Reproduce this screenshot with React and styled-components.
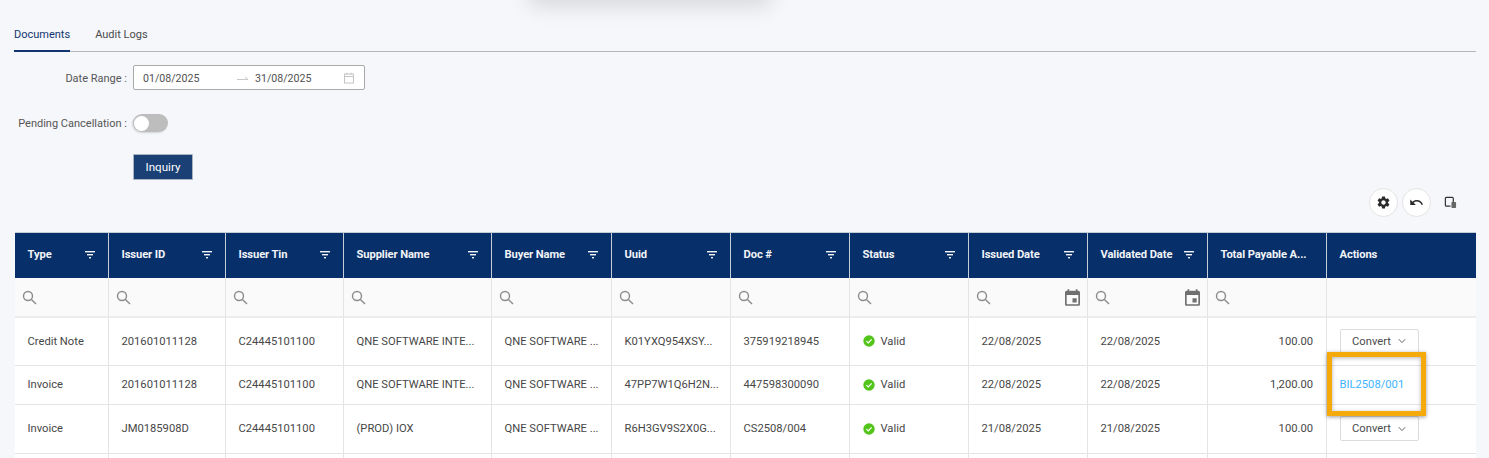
import React from 'react'
import styled, { createGlobalStyle } from 'styled-components'
import { MdSettings, MdUndo } from 'react-icons/md'

const GlobalStyle = createGlobalStyle`
  html, body {
    margin: 0;
    padding: 0;
    height: 100%;
    overflow: hidden;
    background: #f5f7fb;
    font-family: Roboto, 'Liberation Sans', sans-serif;
    font-size: 11.2px;
    color: #434343;
  }
`

const Page = styled.div`
  position: relative;
  height: 458px;
  overflow: hidden;
  padding: 0 13px 0 14px;
`

const TopShadow = styled.div`
  position: absolute;
  top: -30px;
  left: 535px;
  width: 230px;
  height: 30px;
  box-shadow: 0 0 22px 6px rgba(0, 0, 0, 0.13);
`

const Tabs = styled.div`
  display: flex;
  gap: 25px;
  height: 52px;
  padding-top: 22px;
  box-sizing: border-box;
  border-bottom: 1px solid #b4b7bc;
`

const Tab = styled.div`
  height: 30px;
  box-sizing: border-box;
  font-size: 11px;
  line-height: 25px;
  color: ${(p) => (p.$active ? '#12346f' : '#4a4a4a')};
  border-bottom: 2px solid ${(p) => (p.$active ? '#12346f' : 'transparent')};
`

const FormRow = styled.div`
  display: flex;
  align-items: center;
  gap: 6px;
  margin-top: ${(p) => p.$top}px;
`

const Label = styled.label`
  width: 113px;
  padding-top: ${(p) => p.$nudge || 0}px;
  font-size: 11px;
  text-align: right;
  color: #555;
  white-space: nowrap;
`

const RangePicker = styled.div`
  display: flex;
  align-items: center;
  width: 232px;
  height: 25px;
  box-sizing: border-box;
  padding: 1px 9px 0;
  background: #fff;
  border: 1px solid #a9a9a9;
  border-radius: 2px;
  font-size: 10.6px;
  color: #505050;
`

const DateText = styled.span`
  flex: none;
  width: ${(p) => p.$width}px;
`

const Arrow = styled.svg`
  flex: none;
  width: 12px;
  height: 8px;
  margin-right: 6px;
`

const CalendarSvg = styled.svg`
  flex: none;
  width: 12px;
  height: 12px;
  margin-left: auto;
  margin-top: -1px;
`

const Switch = styled.div`
  display: flex;
  align-items: center;
  width: 35px;
  height: 18px;
  border-radius: 9px;
  background: #bdbdbd;
  box-shadow: -1px 1px 2px rgba(0, 0, 0, 0.15);

  &::before {
    content: '';
    width: 15px;
    height: 15px;
    margin-left: 1px;
    border-radius: 50%;
    background: #fff;
  }
`

const InquiryButton = styled.button`
  width: 60px;
  height: 26px;
  margin-left: 119px;
  margin-top: 22px;
  display: block;
  padding: 0;
  background: #1a4075;
  border: 1px solid #a9b2c0;
  border-radius: 1px;
  color: #fff;
  font: inherit;
  font-size: 11.6px;
`

const Toolbar = styled.div`
  display: flex;
  align-items: center;
  justify-content: flex-end;
  gap: 4px;
  margin-top: 8px;
  height: 28px;
  padding-right: 19px;
`

const RoundButton = styled.div`
  display: flex;
  align-items: center;
  justify-content: center;
  width: 29px;
  height: 29px;
  box-sizing: border-box;
  border: 1px solid #e3e3e3;
  border-radius: 50%;
  background: #fff;
  color: #2b2b2b;
  font-size: 15px;
`

const PlainIcon = styled.svg`
  width: 13px;
  height: 13px;
  margin-left: 9px;
`

const Table = styled.table`
  width: 1461px;
  margin: 16px 0 0 1px;
  table-layout: fixed;
  border-collapse: separate;
  border-spacing: 0;
`

const HeadCell = styled.th`
  height: 46px;
  box-sizing: border-box;
  padding: 0 12px 0 12.5px;
  background: #072f69;
  border-right: 1px solid #c4ccd8;
  border-top: 1px solid #c4ccd8;
  color: #f2f4f8;
  font-size: 11.2px;
  font-weight: 700;
  letter-spacing: -0.1px;
  text-align: left;

  &:last-child {
    border-right: none;
  }
`

const HeadInner = styled.div`
  display: flex;
  align-items: center;
  justify-content: space-between;
  white-space: nowrap;
  margin-top: -2px;
`

const FilterCell = styled.td`
  height: 40px;
  box-sizing: border-box;
  padding: 0 7px;
  background: #fafafa;
  border-right: 1px solid #e4e4e4;
  border-bottom: 2px solid #ececec;

  &:last-child {
    border-right: none;
  }
`

const FilterInner = styled.div`
  display: flex;
  align-items: center;
  justify-content: space-between;
  color: #8a8a8a;
`

const Row = styled.tr`
  height: ${(p) => p.$height}px;
`

const Cell = styled.td`
  box-sizing: border-box;
  padding: 0 13px 1px 12.5px;
  background: #fff;
  border-right: 1px solid #e4e4e4;
  border-bottom: 1px solid #e4e4e4;
  color: #474747;
  text-align: ${(p) => (p.$right ? 'right' : 'left')};
  white-space: nowrap;
  overflow: hidden;

  &:last-child {
    border-right: none;
  }
`

const Status = styled.span`
  display: flex;
  align-items: center;
  gap: 6px;
`

const ConvertButton = styled.div`
  display: flex;
  align-items: center;
  justify-content: center;
  gap: 7px;
  width: 79px;
  height: 25px;
  box-sizing: border-box;
  background: #fff;
  border: 1px solid #dcdcdc;
  border-radius: 2px;
  color: #4a4a4a;
`

const DocLink = styled.a`
  color: #3db4ff;
`

const Highlight = styled.div`
  position: absolute;
  left: 1327px;
  top: 352px;
  width: 99px;
  height: 64px;
  box-sizing: border-box;
  border: 5px solid #f5a90a;
  box-shadow: 0 1px 4px rgba(0, 0, 0, 0.4), inset 0 1px 4px rgba(0, 0, 0, 0.3);
`

const FilterIcon = () => (
  <svg width="12" height="10" viewBox="0 0 12 10" fill="#f2f4f8">
    <rect x="1" y="1" width="10" height="1.4" />
    <rect x="3" y="4" width="6" height="1.4" />
    <rect x="5" y="7" width="2" height="1.4" />
  </svg>
)

const SearchIcon = () => (
  <svg width="15" height="15" viewBox="0 0 15 15" fill="none" stroke="#8c8c8c" strokeWidth="1.4">
    <circle cx="6" cy="6" r="4.5" />
    <path d="M9.4 9.4 L14 14" />
  </svg>
)

const EventIcon = () => (
  <svg width="15" height="17" viewBox="3 1 18 20" fill="#6f6f6f">
    <path d="M17 12h-5v5h5v-5zM16 1v2H8V1H6v2H5c-1.11 0-1.99.9-1.99 2L3 19c0 1.1.89 2 2 2h14c1.1 0 2-.9 2-2V5c0-1.1-.9-2-2-2h-1V1h-2zm3 18H5V8h14v11z" />
  </svg>
)

const CalendarIcon = () => (
  <CalendarSvg viewBox="0 0 12 12" fill="none" stroke="#c4c4c4">
    <rect x="1.5" y="2" width="9" height="9" />
    <path d="M1.5 4.5h9M4 .8v2M8 .8v2" />
  </CalendarSvg>
)

const CheckIcon = () => (
  <svg width="12" height="12" viewBox="0 0 12 12">
    <circle cx="6" cy="6" r="5.7" fill="#52c41a" />
    <path d="M3.4 6.1 L5.3 7.9 L8.6 4.4" fill="none" stroke="#fff" strokeWidth="1.3" />
  </svg>
)

const ChevronIcon = () => (
  <svg width="8" height="6" viewBox="0 0 8 6" fill="none" stroke="#666">
    <path d="M.8 1.2 L4 4.6 L7.2 1.2" />
  </svg>
)

const columns = [
  { title: 'Type', width: 94, filter: true },
  { title: 'Issuer ID', width: 117, filter: true },
  { title: 'Issuer Tin', width: 118, filter: true },
  { title: 'Supplier Name', width: 148, filter: true },
  { title: 'Buyer Name', width: 120, filter: true },
  { title: 'Uuid', width: 119, filter: true },
  { title: 'Doc #', width: 119, filter: true },
  { title: 'Status', width: 119, filter: true },
  { title: 'Issued Date', width: 119, filter: true, date: true },
  { title: 'Validated Date', width: 120, filter: true, date: true },
  { title: 'Total Payable A...', width: 119 },
  { title: 'Actions', width: 149, noSearch: true }
]

const rows = [
  {
    height: 48,
    cells: ['Credit Note', '201601011128', 'C24445101100', 'QNE SOFTWARE INTE...', 'QNE SOFTWARE ...', 'K01YXQ954XSY...', '375919218945'],
    issued: '22/08/2025',
    validated: '22/08/2025',
    total: '100.00'
  },
  {
    height: 39,
    cells: ['Invoice', '201601011128', 'C24445101100', 'QNE SOFTWARE INTE...', 'QNE SOFTWARE ...', '47PP7W1Q6H2N...', '447598300090'],
    issued: '22/08/2025',
    validated: '22/08/2025',
    total: '1,200.00',
    link: 'BIL2508/001'
  },
  {
    height: 49,
    cells: ['Invoice', 'JM0185908D', 'C24445101100', '(PROD) IOX', 'QNE SOFTWARE ...', 'R6H3GV9S2X0G...', 'CS2508/004'],
    issued: '21/08/2025',
    validated: '21/08/2025',
    total: '100.00'
  }
]

const App = () => (
  <Page>
    <GlobalStyle />
    <TopShadow />
    <Tabs>
      <Tab $active>Documents</Tab>
      <Tab>Audit Logs</Tab>
    </Tabs>
    <FormRow $top={13}>
      <Label $nudge={1}>Date Range :</Label>
      <RangePicker>
        <DateText $width={94}>01/08/2025</DateText>
        <Arrow viewBox="0 0 12 8" fill="none" stroke="#c8c8c8">
          <path d="M0 5.5h11L8 3" />
        </Arrow>
        <DateText $width={60}>31/08/2025</DateText>
        <CalendarIcon />
      </RangePicker>
    </FormRow>
    <FormRow $top={24}>
      <Label>Pending Cancellation :</Label>
      <Switch />
    </FormRow>
    <InquiryButton>Inquiry</InquiryButton>
    <Toolbar>
      <RoundButton><MdSettings /></RoundButton>
      <RoundButton><MdUndo /></RoundButton>
      <PlainIcon viewBox="0 0 14 14">
        <path d="M10 8V2.5a1 1 0 0 0-1-1H2.5a1 1 0 0 0-1 1V10a1 1 0 0 0 1 1H7" fill="none" stroke="#333" strokeWidth="1.3" />
        <rect x="8" y="6.5" width="5" height="6.5" rx="0.8" fill="#666" />
      </PlainIcon>
    </Toolbar>
    <Table>
      <colgroup>
        {columns.map((col) => <col key={col.title} width={col.width} />)}
      </colgroup>
      <thead>
        <tr>
          {columns.map((col) => (
            <HeadCell key={col.title}>
              <HeadInner>
                {col.title}
                {col.filter && <FilterIcon />}
              </HeadInner>
            </HeadCell>
          ))}
        </tr>
        <tr>
          {columns.map((col) => (
            <FilterCell key={col.title}>
              <FilterInner>
                {!col.noSearch && <SearchIcon />}
                {col.date && <EventIcon />}
              </FilterInner>
            </FilterCell>
          ))}
        </tr>
      </thead>
      <tbody>
        {rows.map((row, i) => (
          <Row key={i} $height={row.height}>
            {row.cells.map((text, j) => <Cell key={j}>{text}</Cell>)}
            <Cell>
              <Status><CheckIcon />Valid</Status>
            </Cell>
            <Cell>{row.issued}</Cell>
            <Cell>{row.validated}</Cell>
            <Cell $right>{row.total}</Cell>
            <Cell>
              {row.link ? (
                <DocLink>{row.link}</DocLink>
              ) : (
                <ConvertButton>Convert <ChevronIcon /></ConvertButton>
              )}
            </Cell>
          </Row>
        ))}
        <Row $height={39}>
          {columns.map((col) => <Cell key={col.title} />)}
        </Row>
      </tbody>
    </Table>
    <Highlight />
  </Page>
)

export default App
